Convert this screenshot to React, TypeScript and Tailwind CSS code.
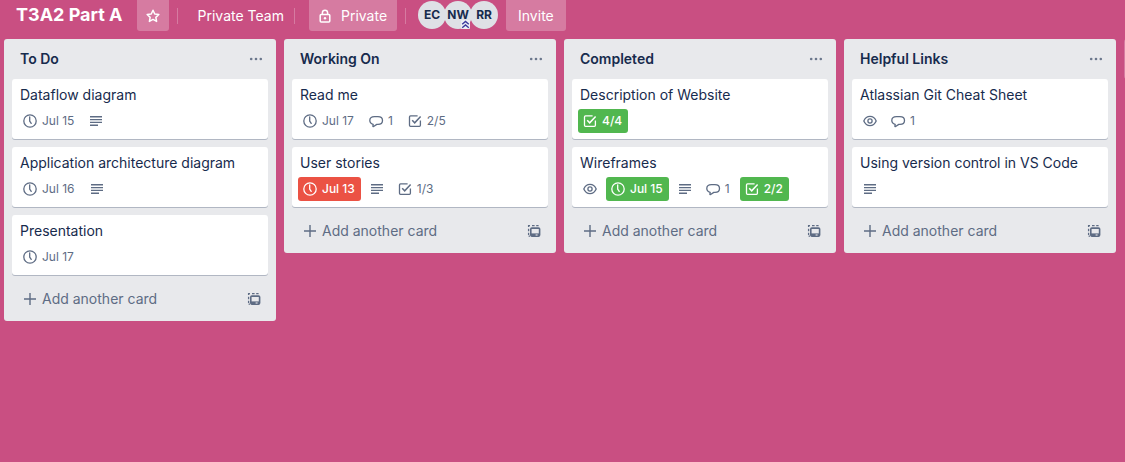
import React from "react";

type BadgeKind = "date" | "text" | "comment" | "check" | "watch";
type Badge = { kind: BadgeKind; label?: string; tone?: "red" | "green" };
type Card = { title: string; badges: Badge[] };
type List = { title: string; cards: Card[] };

const lists: List[] = [
  {
    title: "To Do",
    cards: [
      { title: "Dataflow diagram", badges: [{ kind: "date", label: "Jul 15" }, { kind: "text" }] },
      { title: "Application architecture diagram", badges: [{ kind: "date", label: "Jul 16" }, { kind: "text" }] },
      { title: "Presentation", badges: [{ kind: "date", label: "Jul 17" }] },
    ],
  },
  {
    title: "Working On",
    cards: [
      {
        title: "Read me",
        badges: [
          { kind: "date", label: "Jul 17" },
          { kind: "comment", label: "1" },
          { kind: "check", label: "2/5" },
        ],
      },
      {
        title: "User stories",
        badges: [{ kind: "date", label: "Jul 13", tone: "red" }, { kind: "text" }, { kind: "check", label: "1/3" }],
      },
    ],
  },
  {
    title: "Completed",
    cards: [
      { title: "Description of Website", badges: [{ kind: "check", label: "4/4", tone: "green" }] },
      {
        title: "Wireframes",
        badges: [
          { kind: "watch" },
          { kind: "date", label: "Jul 15", tone: "green" },
          { kind: "text" },
          { kind: "comment", label: "1" },
          { kind: "check", label: "2/2", tone: "green" },
        ],
      },
    ],
  },
  {
    title: "Helpful Links",
    cards: [
      { title: "Atlassian Git Cheat Sheet", badges: [{ kind: "watch" }, { kind: "comment", label: "1" }] },
      { title: "Using version control in VS Code", badges: [{ kind: "text" }] },
    ],
  },
];

function Svg({ children, className = "" }: { children: React.ReactNode; className?: string }) {
  return (
    <svg
      viewBox="0 0 20 20"
      className={`size-5 shrink-0 ${className}`}
      fill="none"
      stroke="currentColor"
      strokeWidth="1.3"
      aria-hidden="true"
    >
      {children}
    </svg>
  );
}

function BadgeIcon({ kind }: { kind: BadgeKind }) {
  switch (kind) {
    case "date":
      return (
        <Svg>
          <circle cx="10" cy="10" r="6.2" />
          <path d="M9.7 5.8v4.4l1.5 2.2" strokeLinecap="round" strokeLinejoin="round" />
        </Svg>
      );
    case "text":
      return (
        <Svg>
          <path d="M4 5.8h12M4 8.6h12M4 11.4h12M4 14.2h8" strokeWidth="1.4" />
        </Svg>
      );
    case "comment":
      return (
        <Svg>
          <path
            d="M7.2 13.3C4.9 12.8 3.8 11.3 3.8 9.6c0-2.4 2-3.9 4.7-3.9h3.4c2.8 0 4.6 1.5 4.6 3.8 0 2.4-1.9 3.9-4.5 3.9h-1.2l-3.2 2.1c-.5.3-.8.1-.7-.5z"
            strokeLinejoin="round"
          />
        </Svg>
      );
    case "check":
      return (
        <Svg>
          <path d="M12.6 4.9H5.5a1 1 0 0 0-1 1v8.4a1 1 0 0 0 1 1h8.9a1 1 0 0 0 1-1V9.5" />
          <path d="m7.2 9.2 2.5 2.6 5.9-6.3" strokeWidth="1.5" />
        </Svg>
      );
    case "watch":
      return (
        <Svg>
          <path d="M3.8 10c1.3-3 3.5-4.6 6.2-4.6s4.9 1.6 6.2 4.6c-1.3 3-3.5 4.6-6.2 4.6S5.1 13 3.8 10z" />
          <circle cx="10" cy="10" r="2.1" />
        </Svg>
      );
  }
}

function BadgeItem({ badge }: { badge: Badge }) {
  const tone =
    badge.tone === "red"
      ? "bg-[#eb5244] text-white font-medium"
      : badge.tone === "green"
        ? "bg-[#51b74f] text-white font-medium"
        : "text-[#5e6c84]";
  return (
    <span className={`flex h-6 items-center gap-0.5 rounded-[3px] pl-0.5 ${badge.label ? "pr-1.5" : "pr-0.5"} ${tone}`}>
      <BadgeIcon kind={badge.kind} />
      {badge.label && <span className="text-xs">{badge.label}</span>}
    </span>
  );
}

function ListColumn({ list }: { list: List }) {
  return (
    <section className="w-[272px] shrink-0 rounded-[3px] bg-[#e8e9ec] px-2">
      <header className="flex h-10 items-center justify-between pl-2 pr-0.5">
        <h2 className="text-sm font-semibold text-[#172b4d]">{list.title}</h2>
        <button type="button" aria-label={`${list.title} list actions`} className="text-[#6b778c]">
          <Svg>
            <g fill="currentColor" stroke="none">
              <circle cx="5.2" cy="10" r="1.3" />
              <circle cx="10" cy="10" r="1.3" />
              <circle cx="14.8" cy="10" r="1.3" />
            </g>
          </Svg>
        </button>
      </header>
      <div className="flex flex-col gap-2">
        {list.cards.map((card) => (
          <article key={card.title} className="rounded-[3px] bg-white px-1.5 py-1.5 shadow-[0_1px_0_#b1b7c3]">
            <h3 className="mb-1 px-0.5 text-sm text-[#172b4d]">{card.title}</h3>
            <div className="flex gap-1">
              {card.badges.map((badge) => (
                <BadgeItem key={badge.kind} badge={badge} />
              ))}
            </div>
          </article>
        ))}
      </div>
      <footer className="mt-2 flex h-[38px] items-start justify-between pl-2 pr-1 text-[#5e6c84]">
        <button type="button" className="flex h-8 items-center gap-0.5 text-sm">
          <Svg>
            <path d="M10 4v12M4 10h12" strokeWidth="1.4" />
          </Svg>
          Add another card
        </button>
        <button type="button" aria-label="Create from template" className="flex h-8 items-center">
          <Svg>
            <path d="M6 4.6H4.6V6M8 4.6h2.6M12.2 4.6h2.4M4.6 7.8v2.4M4.6 11.8v2.2M4.6 15.2H6" />
            <rect x="6.8" y="7.1" width="8.8" height="8" rx="1" strokeWidth="1.6" />
            <path d="M6.8 12.4h8.8v2.8H6.8z" fill="currentColor" stroke="none" />
            <path d="M11.6 14h2" stroke="#e8e9ec" strokeWidth="1.1" />
          </Svg>
        </button>
      </footer>
    </section>
  );
}

function Divider({ className }: { className: string }) {
  return <span className={`h-4 w-px bg-white/25 ${className}`} />;
}

const headerButton = "flex h-[31px] items-center rounded-b-[3px] bg-white/25 text-sm text-white";

export default function App() {
  return (
    <div className="min-h-screen overflow-hidden bg-[#c94f82] font-['Inter','Liberation_Sans',sans-serif]">
      <header className="flex h-[39px] items-start">
        <div className="flex h-[31px] items-center text-sm text-white">
          <h1 className="ml-4 mr-3.5 -mt-0.5 text-lg font-bold">T3A2 Part A</h1>
          <button type="button" aria-label="Star board" className={`${headerButton} w-8 justify-center`}>
            <Svg>
              <path
                d="m10 4.2 1.75 3.75 4.1.55-3 2.85.75 4.05L10 13.45 6.4 15.4l.75-4.05-3-2.85 4.1-.55z"
                strokeWidth="1.5"
                strokeLinejoin="round"
              />
            </Svg>
          </button>
          <Divider className="mx-2" />
          <button type="button" className="pl-3 pr-0.5">Private Team</button>
          <Divider className="ml-2 mr-3.5" />
          <button type="button" className={`${headerButton} gap-1.5 pl-1.5 pr-2.5`}>
            <Svg>
              <rect x="5.2" y="8.5" width="9.6" height="7.4" rx="1" strokeWidth="1.5" />
              <path d="M7.4 8.5V6.8a2.6 2.6 0 0 1 5.2 0v1.7" strokeWidth="1.5" />
              <circle cx="10" cy="12.2" r="1.2" fill="currentColor" stroke="none" />
            </Svg>
            Private
          </button>
          <Divider className="ml-2 mr-3" />
          <div className="-mt-0.5 flex -space-x-0.5">
            {["EC", "NW", "RR"].map((initials) => (
              <span
                key={initials}
                className="relative flex size-7 items-center justify-center rounded-full bg-[#dfe1e6] text-xs font-bold text-[#172b4d]"
              >
                {initials}
                {initials === "NW" && (
                  <svg viewBox="0 0 9 9" className="absolute bottom-0 right-0.5 size-[9px]" aria-hidden="true">
                    <rect width="9" height="9" rx="1" fill="#eceef4" />
                    <path d="M1.2 4.3 4.5 1.5l3.3 2.8M1.2 7.8 4.5 5l3.3 2.8" fill="none" stroke="#3c3a9e" strokeWidth="1.4" />
                  </svg>
                )}
              </span>
            ))}
          </div>
          <button type="button" className={`${headerButton} ml-2 px-3`}>Invite</button>
        </div>
      </header>
      <main className="flex items-start gap-2 pl-1">
        {lists.map((list) => (
          <ListColumn key={list.title} list={list} />
        ))}
        <button type="button" aria-label="Add another list" className="h-10 w-[272px] shrink-0 rounded-[3px] bg-white/25" />
      </main>
    </div>
  );
}
